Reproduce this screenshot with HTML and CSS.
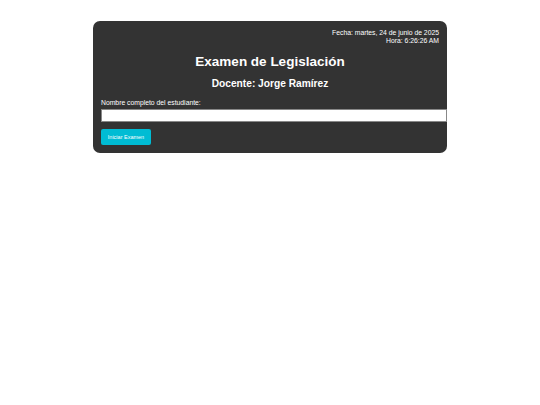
FILE: index.html
```html
<!DOCTYPE html>
<html lang="es">
<head>
<meta charset="utf-8">
<title>Examen de Legislación</title>
<link rel="stylesheet" href="styles.css">
</head>
<body>
<div class="card">
  <div class="datetime">
    <div>Fecha: martes, 24 de junio de 2025</div>
    <div>Hora: 6:26:26 AM</div>
  </div>
  <h1 class="title">Examen de Legislación</h1>
  <h2 class="subtitle">Docente: Jorge Ramírez</h2>
  <label class="label" for="nombre">Nombre completo del estudiante:</label>
  <input class="input" id="nombre" type="text">
  <button class="btn" type="button">Iniciar Examen</button>
</div>
</body>
</html>
```

FILE: styles.css
```css
html, body {
  margin: 0;
  padding: 0;
  background: #ffffff;
  font-family: "Liberation Sans", Arial, sans-serif;
}
body {
  padding-top: 21px;
}
.card {
  width: 338px;
  margin: 0 auto;
  padding: 8px;
  background: #333333;
  border-radius: 7px;
  color: #ffffff;
  display: flex;
  flex-direction: column;
}
.datetime {
  text-align: right;
  font-size: 6.8px;
  line-height: 7.5px;
}
.title {
  margin: 9px 0 0;
  text-align: center;
  font-size: 13.5px;
  line-height: 17px;
  font-weight: bold;
}
.subtitle {
  margin: 7px 0 0;
  text-align: center;
  font-size: 10.2px;
  line-height: 13px;
  font-weight: bold;
}
.label {
  margin-top: 9px;
  font-size: 6.8px;
  line-height: 8px;
}
.input {
  box-sizing: content-box;
  width: 100%;
  height: 7px;
  margin: 2px 0 0;
  padding: 2px 3px;
  border: 1px solid #888888;
  background: #ffffff;
  font-size: 7px;
}
.btn {
  align-self: flex-start;
  margin-top: 7px;
  width: 50px;
  height: 16px;
  padding: 0;
  border: none;
  border-radius: 2px;
  background: #00bcd4;
  color: #ffffff;
  font-family: "Liberation Sans", Arial, sans-serif;
  font-size: 5.5px;
}
```
